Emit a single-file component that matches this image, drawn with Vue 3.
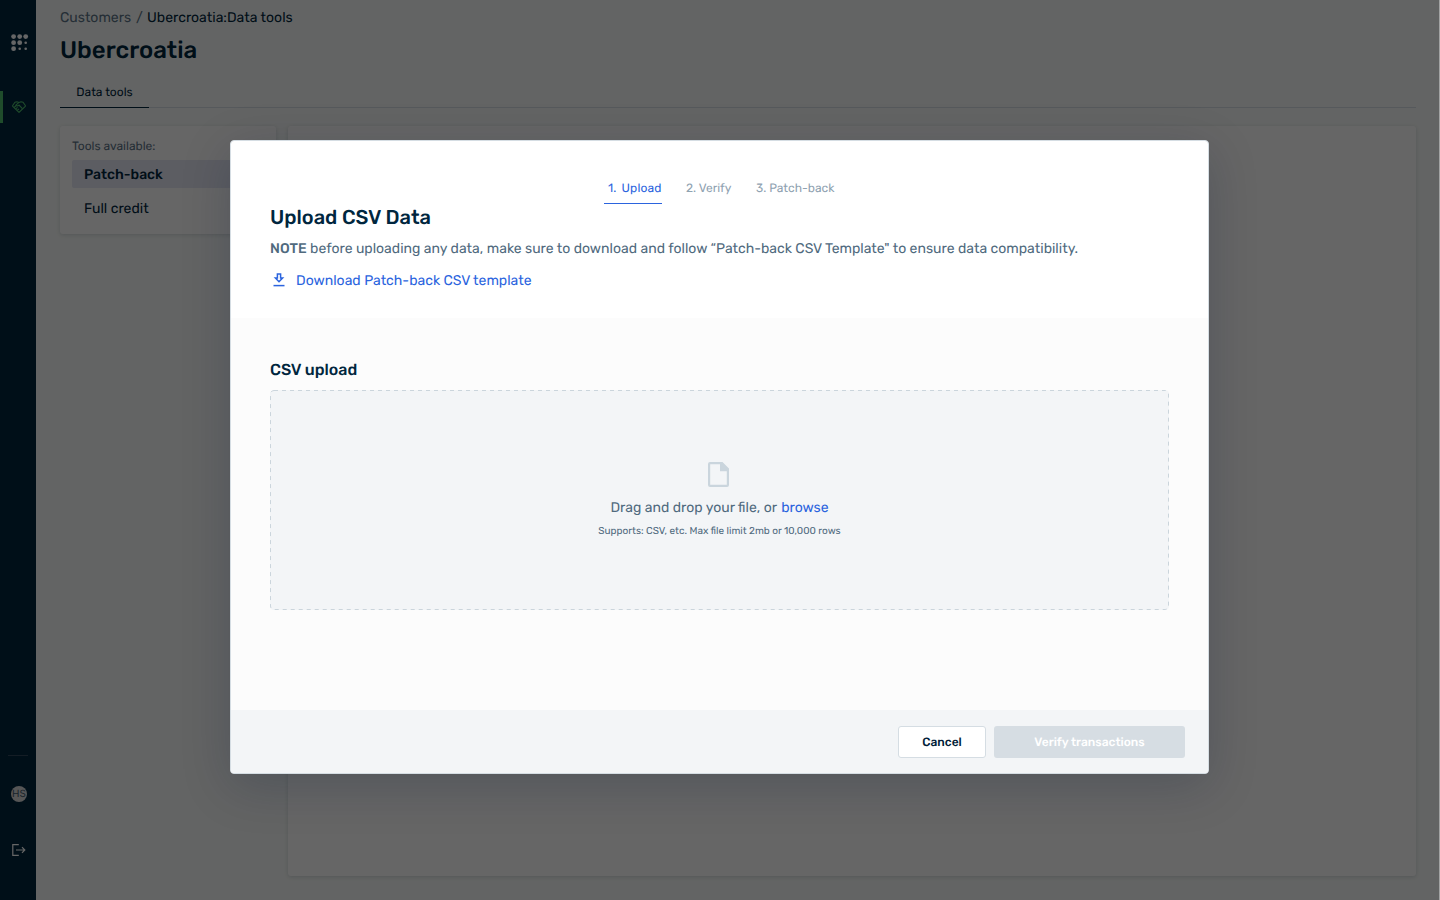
<template>
  <div class="app">
    <div class="shell">
      <aside class="sidebar">
        <svg class="logo" viewBox="0 0 18 18" fill="#fff">
          <circle v-for="(dot, i) in logoDots" :key="i" :cx="dot[0]" :cy="dot[1]" :r="dot[2]" />
        </svg>
        <div class="nav-item">
          <svg viewBox="0 0 14 12" fill="none" stroke="#4fbd6c" stroke-width="1.1">
            <path d="M7 11.4L.8 5.4Q.4 4.8.8 4.2L3 1.2 5 .7 7 1.4 9 .7 11 1.2 13.2 4.2Q13.6 4.8 13.2 5.4Z" />
            <path d="M7 1.4L3.8 4.2Q5.2 5.6 7 4.1L10.4 7.6M2.2 6.4L3.8 5M3.7 7.9L5.5 6.3M5.2 9.4L7 7.8" />
          </svg>
        </div>
        <div class="sidebar-bottom">
          <div class="avatar">HS</div>
          <svg class="logout" viewBox="0 0 14 12" fill="none" stroke="#fff" stroke-width="1.2">
            <path d="M6.8.7H.8V11.3H6.8M4 6H12.6M10 3.2L12.8 6 10 8.8" />
          </svg>
        </div>
      </aside>

      <main class="page">
        <nav class="breadcrumb">
          <a>Customers</a><i>/</i><span>Ubercroatia:Data tools</span>
        </nav>
        <h1>Ubercroatia</h1>
        <div class="tabs"><span class="tab">Data tools</span></div>
        <div class="columns">
          <section class="card tools">
            <p>Tools available:</p>
            <button
              v-for="tool in tools"
              :key="tool"
              :class="['tool', { active: tool === activeTool }]"
              @click="activeTool = tool"
            >
              {{ tool }}
            </button>
          </section>
          <section class="card content"></section>
        </div>
      </main>
    </div>

    <div class="overlay">
      <div class="modal">
        <header class="modal-header">
          <ol class="steps">
            <li v-for="(step, i) in steps" :key="step" :class="['step', `step-${i + 1}`]">
              {{ i + 1 }}. {{ step }}
            </li>
          </ol>
          <h2>Upload CSV Data</h2>
          <p class="note">
            <strong>NOTE</strong> before uploading any data, make sure to download and follow “Patch-back CSV Template" to ensure data compatibility.
          </p>
          <a class="download">
            <svg viewBox="0 0 12 14" fill="none" stroke="#2b64de" stroke-width="1.5">
              <path d="M4.4 1.1H7.6V5H9.6L6 8.7 2.4 5H4.4Z" />
              <path d="M.5 12.6H11.5" />
            </svg>
            <span>Download Patch-back CSV template</span>
          </a>
        </header>

        <div class="modal-body">
          <h3>CSV upload</h3>
          <div class="dropzone">
            <svg class="outline">
              <rect x=".5" y=".5" width="898" height="219" rx="3.5" />
            </svg>
            <svg class="file" viewBox="0 0 21 25">
              <path
                fill="#cad5dd"
                fill-rule="evenodd"
                d="M2 0H14.5L21 6.5V23Q21 25 19 25H2Q0 25 0 23V2Q0 0 2 0ZM2.2 2.2V22.8H18.8V9.3H12V2.2Z"
              />
            </svg>
            <p class="drop-text"><span>Drag and drop your file, or </span><a>browse</a></p>
            <p class="hint">Supports: CSV, etc. Max file limit 2mb or 10,000 rows</p>
          </div>
        </div>

        <footer class="modal-footer">
          <button class="btn cancel">Cancel</button>
          <button class="btn verify" disabled>Verify transactions</button>
        </footer>
      </div>
    </div>
  </div>
</template>

<script setup>
import { ref } from "vue";

const tools = ["Patch-back", "Full credit"];
const activeTool = ref("Patch-back");
const steps = ["Upload", "Verify", "Patch-back"];

// cx, cy, r
const logoDots = [
  [2.6, 2.6, 2.4], [8.7, 2.6, 2.4], [14.7, 2.6, 2.4],
  [2.6, 8.7, 2.4], [8.7, 8.7, 2.4], [14.7, 8.7, 1.3],
  [2.6, 14.7, 2.4], [8.7, 14.7, 1.3], [14.7, 14.7, 1.3],
];
</script>

<style>
body {
  margin: 0;
  overflow: hidden;
}
</style>

<style scoped>
.app {
  position: relative;
  height: 100vh;
  overflow: hidden;
  font-family: Rubik, Roboto, sans-serif;
  font-size: 14px;
  text-rendering: geometricPrecision;
  color: #00263e;
}

.app * {
  box-sizing: border-box;
}

p,
h1,
h2,
h3,
ol {
  margin: 0;
  padding: 0;
  font-weight: 500;
  white-space: nowrap;
}

button {
  font-family: inherit;
  text-rendering: inherit;
  border: 0;
  padding: 0;
  white-space: nowrap;
}

.shell {
  display: flex;
  height: 100%;
  background: #f8fbf9;
}

.sidebar {
  display: flex;
  flex-direction: column;
  width: 36px;
  flex-shrink: 0;
  background: #00263e;
}

.logo {
  width: 18px;
  height: 18px;
  margin: 34px 0 0 11px;
}

.nav-item {
  display: flex;
  align-items: center;
  height: 32px;
  margin-top: 39px;
  border-left: 3px solid #4fbd6c;
  padding-left: 9px;
}

.nav-item svg {
  width: 14px;
  height: 12px;
}

.sidebar-bottom {
  display: flex;
  flex-direction: column;
  margin: auto 8px 42px;
  border-top: 1px solid #33495c;
  padding-top: 30px;
}

.avatar {
  width: 16px;
  height: 16px;
  margin-left: 3px;
  border-radius: 50%;
  background: #d7d7d7;
  color: #40576a;
  font: 10px/17px Inter, sans-serif;
  text-align: center;
}

.logout {
  width: 14px;
  height: 12px;
  margin: 42px 0 2px 4px;
}

.page {
  flex: 1;
  display: flex;
  flex-direction: column;
  padding: 9px 24px 24px;
}

.breadcrumb {
  display: flex;
  height: 18px;
  line-height: 18px;
}

.breadcrumb a {
  width: 76px;
  color: #5c7488;
}

.breadcrumb i {
  width: 11px;
  font-style: normal;
  color: #5c7488;
}

h1 {
  margin-top: 7px;
  font-size: 24px;
  line-height: 32px;
}

.tabs {
  display: flex;
  height: 34px;
  margin-top: 8px;
  border-bottom: 1px solid #d7dfe5;
}

.tab {
  width: 89px;
  height: 34px;
  border-bottom: 1px solid #00263e;
  font-size: 12px;
  line-height: 36px;
  text-align: center;
}

.columns {
  display: flex;
  flex: 1;
  gap: 12px;
  margin-top: 18px;
}

.card {
  background: #fff;
  border-radius: 3px;
  box-shadow: 0 1px 4px rgba(0, 38, 62, 0.16);
}

.tools {
  width: 216px;
  height: 108px;
  padding: 11px 12px;
}

.tools p {
  height: 18px;
  margin-bottom: 5px;
  font-size: 12px;
  font-weight: 400;
  line-height: 18px;
  color: #5c7488;
}

.tool {
  display: block;
  width: 192px;
  height: 28px;
  margin-bottom: 6px;
  padding-left: 12px;
  border-radius: 2px;
  background: none;
  color: #00263e;
  font-size: 14px;
  text-align: left;
}

.tool.active {
  background: #e6e8f5;
  font-weight: 500;
}

.content {
  flex: 1;
}

.overlay {
  position: absolute;
  inset: 0;
  padding: 140px 0 0 230px;
  background: rgba(0, 0, 0, 0.6);
  border-right: 1px solid #a2a3a3;
}

.modal {
  display: flex;
  flex-direction: column;
  width: 979px;
  height: 634px;
  overflow: hidden;
  border: 1px solid #d5dde3;
  border-radius: 4px;
  background: #fff;
  box-shadow: 0 12px 50px rgba(0, 20, 50, 0.2);
}

.modal-header {
  height: 177px;
  padding: 37px 39px 0;
}

.steps {
  display: flex;
  height: 26px;
  margin-left: 334px;
  list-style: none;
}

.step {
  height: 26px;
  font-size: 12px;
  font-weight: 400;
  line-height: 21px;
  color: #8fa2b1;
}

.step-1 {
  width: 58px;
  padding-left: 4px;
  border-bottom: 1px solid #2b64de;
  color: #2b64de;
  letter-spacing: 0.15px;
  word-spacing: 2px;
}

.step-2 {
  margin-left: 24px;
  width: 46px;
}

.step-3 {
  margin-left: 24px;
}

h2 {
  font-size: 20px;
  line-height: 26px;
}

.note {
  margin-top: 9px;
  font-weight: 400;
  line-height: 20px;
  color: #506a7e;
}

.note strong {
  font-weight: 500;
}

.download {
  display: flex;
  height: 20px;
  margin-top: 12px;
  line-height: 20px;
  color: #2b64de;
}

.download svg {
  width: 12px;
  height: 14px;
  margin: 2px 11px 0 3px;
}

.modal-body {
  flex: 1;
  padding: 41px 39px 0;
  background: #fcfcfc;
}

h3 {
  height: 31px;
  font-size: 16px;
  line-height: 22px;
}

.dropzone {
  position: relative;
  display: flex;
  flex-direction: column;
  align-items: center;
  width: 899px;
  height: 220px;
  padding-top: 72px;
  border-radius: 4px;
  background: #f3f5f7;
}

.outline {
  position: absolute;
  inset: 0;
  width: 899px;
  height: 220px;
  fill: none;
  stroke: #cbd5dc;
  stroke-dasharray: 4 4;
}

.file {
  width: 21px;
  height: 25px;
  margin-right: 2px;
}

.drop-text {
  margin-top: 11px;
  font-weight: 400;
  line-height: 20px;
  color: #506a7e;
  white-space: pre;
}

.drop-text a {
  margin-left: 1px;
  color: #2b64de;
}

.hint {
  margin-top: 5px;
  font-size: 10px;
  font-weight: 400;
  line-height: 16px;
  color: #506a7e;
}

.modal-footer {
  display: flex;
  justify-content: flex-end;
  gap: 8px;
  height: 63px;
  padding: 16px 23px 0;
  background: #f3f5f7;
}

.btn {
  height: 32px;
  border-radius: 3px;
  font-size: 12px;
  font-weight: 500;
}

.cancel {
  width: 88px;
  border: 1px solid #d5dde3;
  background: #fff;
  color: #001d38;
}

.verify {
  width: 191px;
  background: #d6dde3;
  color: #fff;
}
</style>
